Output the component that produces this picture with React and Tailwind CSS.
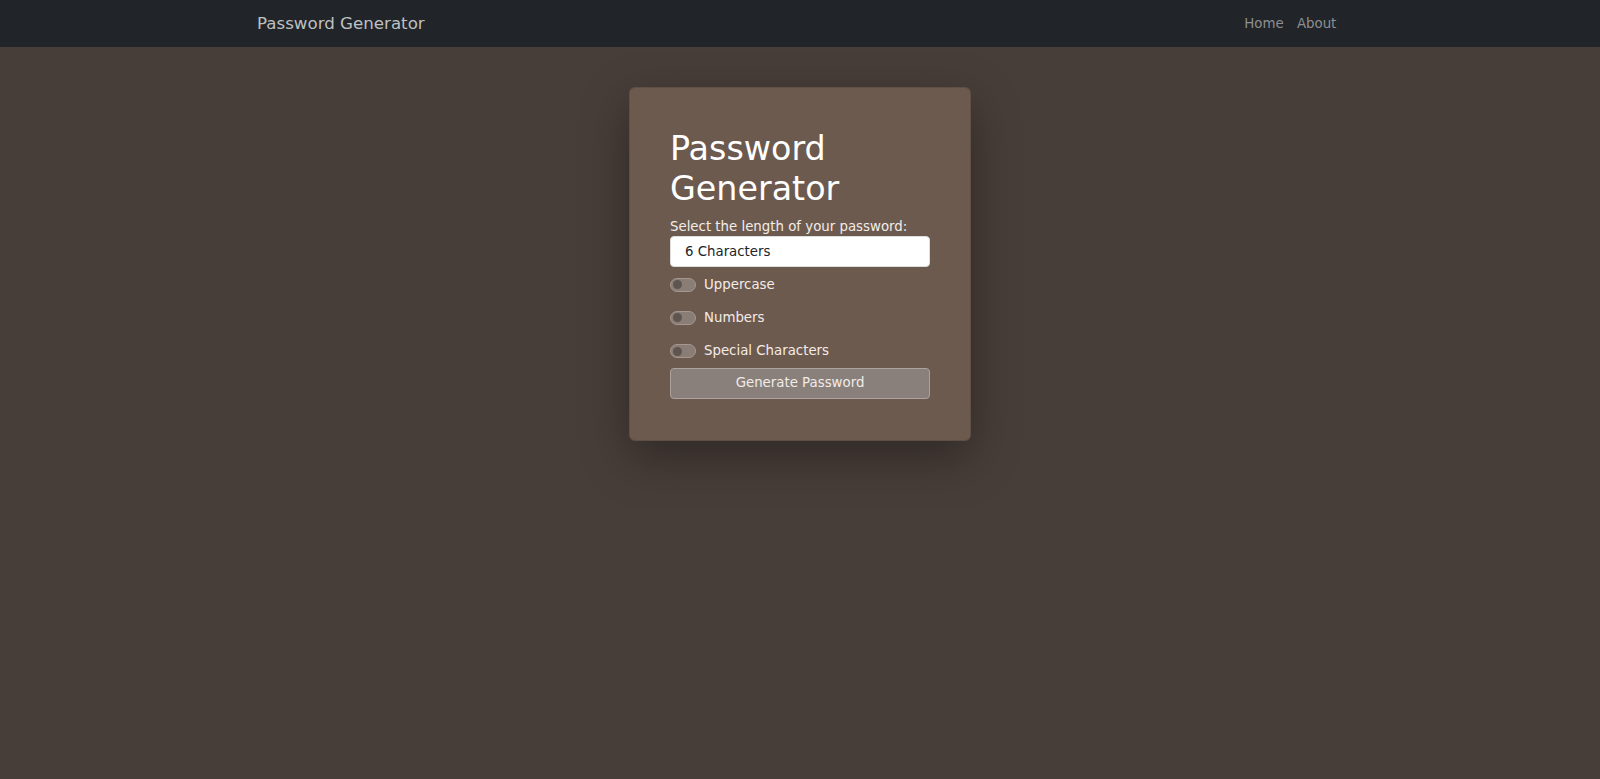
import { useState } from "react";

const options = [
  { id: "upper", label: "Uppercase" },
  { id: "numbers", label: "Numbers" },
  { id: "special", label: "Special Characters" },
];

const Toggle = ({ on, onClick }) => (
  <button
    type="button"
    onClick={onClick}
    className="flex h-[14px] w-[26px] items-center rounded-full border border-[#a3978f] bg-[#8a7d76] px-[2px]"
  >
    <span className="h-[9px] w-[9px] rounded-full bg-[#5e5550]" />
  </button>
);

const App = () => {
  const [checked, setChecked] = useState({});

  return (
    <div className="min-h-[779px] bg-[#483e39] font-['DejaVu_Sans',sans-serif] text-[13.33px] leading-[20px]">
      <nav className="h-[47px] bg-[#212529]">
        <div className="mx-auto flex h-full max-w-[1086px] items-center justify-between">
          <span className="text-[16.67px] leading-[25px] text-[#bfc0c1]">
            Password Generator
          </span>
          <div className="flex">
            <a className="px-[6.67px] text-[#8f8f90]">Home</a>
            <a className="px-[6.67px] text-[#8f8f90]">About</a>
          </div>
        </div>
      </nav>

      <div className="flex justify-center pt-[40px]">
        <div className="w-[342px] rounded-[6px] border border-[#5f4f45] bg-[#6d5a4e] px-[40px] pt-[41px] pb-[41px] shadow-[0_16px_48px_rgba(0,0,0,0.35)]">
          <h1 className="mb-[8px] text-[33.33px] leading-[40px] text-white">
            Password Generator
          </h1>
          <label className="block leading-[19px] text-[#f3ece8]">
            Select the length of your password:
          </label>
          <div className="flex h-[31px] items-center rounded-[4px] border border-[#dedede] bg-white pl-[14px] text-[#212529]">
            6 Characters
          </div>
          <div className="flex flex-col pt-[1px]">
            {options.map((o) => (
              <div key={o.id} className="flex h-[33.33px] items-center gap-[8px]">
                <Toggle
                  on={checked[o.id]}
                  onClick={() =>
                    setChecked((c) => ({ ...c, [o.id]: !c[o.id] }))
                  }
                />
                <span className="text-[#f3ece8]">{o.label}</span>
              </div>
            ))}
          </div>
          <button
            type="button"
            className="flex h-[31px] w-full items-center justify-center rounded-[4px] border border-[#ada39d] bg-[#8a807b] text-[#f1ebe7]"
          >
            Generate Password
          </button>
        </div>
      </div>
    </div>
  );
};

export default App;
